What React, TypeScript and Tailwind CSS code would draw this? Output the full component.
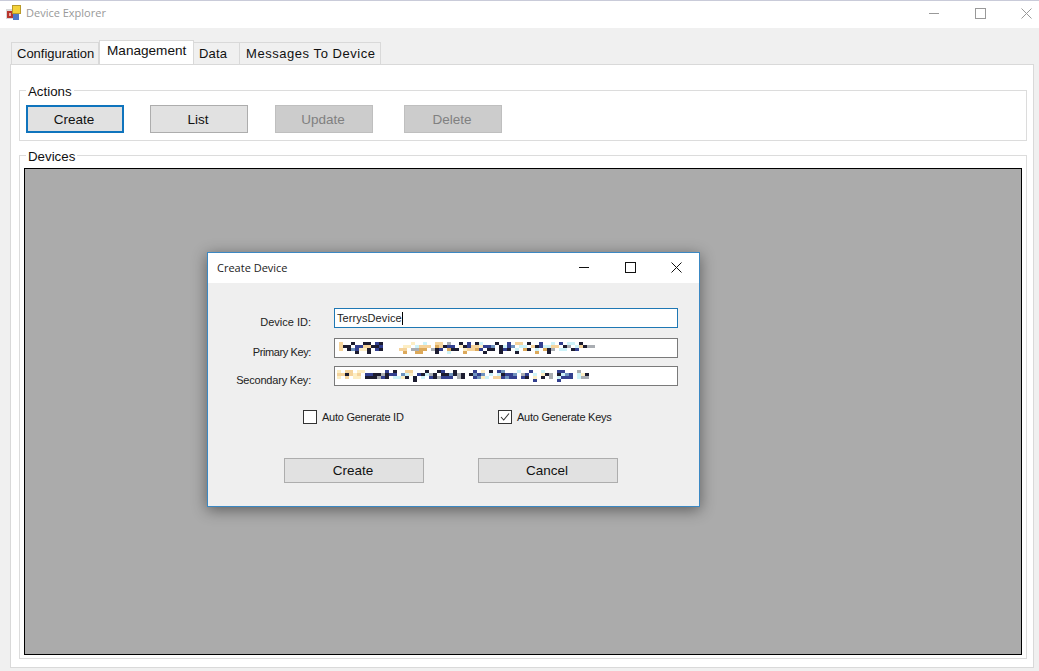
import React from "react";

const colors: Record<string, string> = {
  k: "#1c1c30",
  n: "#33408f",
  b: "#6f93bd",
  o: "#f5d39b",
  y: "#fdeec4",
  c: "#cdf2f8",
  g: "#a9adb2",
  t: "#dca95a",
};

// pixelated (censored) key values, one char per 4x3 cell
const primaryKey = [
  "o..k..kk.nk.......y..c..oo.g..k.n.kc...k..n.oo.k..n..c.n.cc.k...",
  "okk.nnookkn.....yy.cooo.toknn.yknooynnb.kcnb.cc.oknccoo.kg.cokgg",
  "o.kbnyyk.nk....oo.ggtt.gkn.tkk.yootn.kk.knk.c.tk.c.tkg.cc.kn....",
  "....k..k........t..tt...k..c...t....k...k...k....t..k...........",
];

const secondaryKey = [
  "y.oo.yy.....n.k..oo...k..kn..k....n.y.k.nb...c..n..c...nn...g...",
  "ookoyo.nnkkgknn.bcy.nkcgk.kkbkgk.kbnb.c.cknnb.gn.c.ykg.kcbn.cyk.",
  "y.o.yy.kkkgnk.ccyk.k.c.nkgnnn.gk..nbyc.oonbnn.nk.y.k.g.cnnn.cgg.",
  "...................k.............................n.....n.........",
];

const Mosaic = ({ rows }: { rows: string[] }) => (
  <svg width="260" height="12" shapeRendering="crispEdges" className="block">
    {rows.map((row, y) =>
      row.split("").map((ch, x) =>
        colors[ch] ? (
          <rect key={`${x}-${y}`} x={x * 4} y={y * 3} width="4" height="3" fill={colors[ch]} />
        ) : null
      )
    )}
  </svg>
);

const WindowControls = ({ color }: { color: string }) => (
  <div className="flex items-center gap-[35px]">
    <svg width="11" height="11" stroke={color} fill="none" shapeRendering="crispEdges">
      <line x1="0" y1="5.5" x2="10" y2="5.5" />
    </svg>
    <svg width="11" height="11" stroke={color} fill="none" shapeRendering="crispEdges">
      <rect x="0.5" y="0.5" width="10" height="10" />
    </svg>
    <svg width="11" height="11" stroke={color} fill="none">
      <path d="M0.5 0.5L10.5 10.5M10.5 0.5L0.5 10.5" />
    </svg>
  </div>
);

const AppIcon = () => (
  <svg width="16" height="16" shapeRendering="crispEdges">
    <rect x="0" y="4" width="7" height="10" fill="#d8d8d8" />
    <rect x="1" y="6" width="6" height="7" fill="#b8342c" />
    <rect x="6.5" y="0.5" width="8" height="8" fill="#f4d23a" stroke="#b99a2a" />
    <rect x="7" y="9" width="6" height="6" fill="#4f79c8" />
    <rect x="3" y="8" width="2" height="3" fill="#e9b0a8" />
  </svg>
);

const Tab = ({ label, active, className }: { label: string; active?: boolean; className: string }) => (
  <div
    className={`border border-[#d9d9d9] ${
      active
        ? "relative z-10 -mb-px h-[25px] bg-white pt-[2px]"
        : "h-[22px] border-b-0 bg-[#f0f0f0] pt-[3px]"
    } ${className}`}
  >
    {label}
  </div>
);

const ActionButton = ({ label, className }: { label: string; className: string }) => (
  <button className={`h-[28px] w-[98px] pr-[2px] pt-[2px] text-[13.5px] ${className}`}>{label}</button>
);

const KeyField = ({ label, rows, rowClass, pad, track }: { label: string; rows: string[]; rowClass: string; pad: string; track: string }) => (
  <div className={`flex h-[20px] ${rowClass}`}>
    <div className={`w-[103px] pt-[6px] text-right text-[11px] leading-[16px] text-[#222] ${track}`}>{label}</div>
    <div className={`ml-[23px] flex h-[20px] w-[344px] items-center border border-[#7a7a7a] bg-white ${pad}`}>
      <Mosaic rows={rows} />
    </div>
  </div>
);

export default function App() {
  return (
    <div className="relative flex h-[671px] w-[1039px] flex-col overflow-hidden bg-[#f0f0f0] font-['Liberation_Sans',sans-serif] text-[#111]">
      {/* Main window title bar */}
      <div className="flex h-[28px] items-center border-t border-[#c9cbd9] bg-white pb-[3px] pl-[6px] pr-[7px]">
        <AppIcon />
        <span className="ml-[4px] font-['Open_Sans',sans-serif] text-[11px] text-[#999]">Device Explorer</span>
        <div className="ml-auto">
          <WindowControls color="#999" />
        </div>
      </div>

      {/* Tabs */}
      <div className="mt-[13px] flex h-[23px] items-start pl-[11px] text-[13px] leading-[16px]">
        <Tab label="Configuration" className="mt-[1px] w-[88px] pl-[5px]" />
        <Tab label="Management" active className="-mt-[1px] w-[95px] pl-[7px] text-[13.6px]" />
        <Tab label="Data" className="mt-[1px] w-[46px] border-l-0 pl-[5px] tracking-[0.2px]" />
        <Tab label="Messages To Device" className="mt-[1px] w-[141px] border-l-0 pl-[6px] tracking-[0.55px]" />
      </div>

      {/* Tab page */}
      <div className="ml-[10px] mr-[5px] flex h-[604px] flex-col border border-[#d9d9d9] bg-white pl-[8px] pr-[6px] pt-[25px]">
        {/* Actions group */}
        <div className="relative flex h-[51px] shrink-0 items-start border border-[#dcdcdc] pl-[6px] pt-[14px]">
          <span className="absolute -top-[7px] left-[6px] bg-white px-[2px] text-[13.3px] leading-[16px]">Actions</span>
          <ActionButton label="Create" className="border-2 border-[#0f74bd] bg-[#e1e1e1]" />
          <ActionButton label="List" className="ml-[26px] border border-[#adadad] bg-[#e1e1e1]" />
          <ActionButton label="Update" className="ml-[27px] border border-[#bfbfbf] bg-[#cccccc] text-[#808080]" />
          <ActionButton label="Delete" className="ml-[31px] border border-[#bfbfbf] bg-[#cccccc] text-[#808080]" />
        </div>

        {/* Devices group */}
        <div className="relative mt-[14px] flex h-[504px] shrink-0 flex-col border border-[#dcdcdc] px-[4px] pb-[3px] pt-[12px]">
          <span className="absolute -top-[7px] left-[6px] bg-white px-[2px] text-[13.3px] leading-[16px]">Devices</span>
          <div className="flex-1 border border-black bg-[#ababab]" />
        </div>
      </div>

      {/* Create Device dialog */}
      <div className="absolute left-[207px] top-[252px] flex h-[255px] w-[493px] flex-col border border-[#3b88c3] bg-[#efefef] shadow-[0_3px_14px_rgba(0,0,0,0.45)]">
        <div className="flex h-[30px] shrink-0 items-center bg-white pl-[9px] pr-[17px]">
          <span className="font-['Open_Sans',sans-serif] text-[11px] text-[#222]">Create Device</span>
          <div className="-mt-[2px] ml-auto">
            <WindowControls color="#111" />
          </div>
        </div>

        <div className="flex flex-col pt-[25px]">
          <div className="flex h-[20px]">
            <div className="w-[103px] pt-[6px] text-right text-[11px] leading-[16px] text-[#222]">Device ID:</div>
            <div className="ml-[23px] flex h-[20px] w-[344px] items-center border border-[#1f78b4] bg-white pl-[2px] text-[11px] tracking-[0.1px] text-[#222]">
              TerrysDevice
              <span className="h-[13px] w-px bg-black" />
            </div>
          </div>
          <KeyField label="Primary Key:" rows={primaryKey} rowClass="mt-[10px]" pad="pl-[4px]" track="tracking-[-0.4px]" />
          <KeyField label="Secondary Key:" rows={secondaryKey} rowClass="mt-[8px]" pad="pl-[2px]" track="tracking-[-0.2px]" />

          <div className="mt-[24px] flex h-[14px] items-center text-[11px] tracking-[-0.25px] text-[#222]">
            <div className="ml-[95px] h-[14px] w-[14px] border border-[#333] bg-white" />
            <span className="ml-[5px] w-[176px]">Auto Generate ID</span>
            <div className="flex h-[14px] w-[14px] items-center justify-center border border-[#333] bg-white">
              <svg width="10" height="10" fill="none" stroke="#333" strokeWidth="1.1">
                <path d="M1 5L3.7 8L9 1.5" />
              </svg>
            </div>
            <span className="ml-[5px]">Auto Generate Keys</span>
          </div>

          <div className="ml-[76px] mt-[34px] flex gap-[54px] text-[13.5px]">
            <button className="h-[25px] w-[140px] border border-[#adadad] bg-[#e1e1e1] pr-[2px] pt-[2px]">Create</button>
            <button className="h-[25px] w-[140px] border border-[#adadad] bg-[#e1e1e1] pr-[2px] pt-[2px]">Cancel</button>
          </div>
        </div>
      </div>
    </div>
  );
}
